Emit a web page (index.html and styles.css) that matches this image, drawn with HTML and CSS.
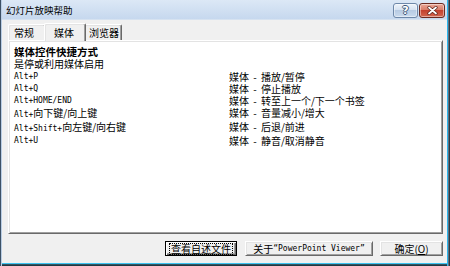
FILE: index.html
```html
<!DOCTYPE html>
<html lang="zh-CN">
<head>
    <meta charset="UTF-8">
    <title>幻灯片放映帮助</title>
    <link rel="stylesheet" href="styles.css">
</head>
<body>
    <div class="window">
        <!-- 标题栏 -->
        <div class="titlebar">
            <span class="title">幻灯片放映帮助</span>
            <div class="tb-buttons">
                <div class="tb-btn help"><span class="q">?</span></div>
                <div class="tb-btn close">
                    <svg width="11" height="9" viewBox="0 0 11 9">
                        <path d="M2 1.5 L9 7.5 M9 1.5 L2 7.5" stroke="#5a2018" stroke-width="3.2" stroke-linecap="round"/>
                        <path d="M2 1.5 L9 7.5 M9 1.5 L2 7.5" stroke="#ffffff" stroke-width="1.8" stroke-linecap="round"/>
                    </svg>
                </div>
            </div>
        </div>

        <div class="content">
            <div class="tabs">
                <div class="tab tab-general">常规</div>
                <div class="tab tab-media active">媒体</div>
                <div class="tab tab-browser">浏览器</div>
            </div>

            <div class="panel">
                <div class="heading">媒体控件快捷方式</div>
                <div class="intro">是停或利用媒体启用</div>
                <div class="keys">
                    <div class="key">Alt+P</div>
                    <div class="desc">媒体 - 播放/暂停</div>
                    <div class="key">Alt+Q</div>
                    <div class="desc">媒体 - 停止播放</div>
                    <div class="key">Alt+HOME/END</div>
                    <div class="desc">媒体 - 转至上一个/下一个书签</div>
                    <div class="key">Alt+<span class="cn">向下键/向上键</span></div>
                    <div class="desc">媒体 - 音量减小/增大</div>
                    <div class="key">Alt+Shift+<span class="cn">向左键/向右键</span></div>
                    <div class="desc">媒体 - 后退/前进</div>
                    <div class="key">Alt+U</div>
                    <div class="desc">媒体 - 静音/取消静音</div>
                </div>
            </div>

            <div class="buttons">
                <button class="btn btn-readme default"><span class="focus">查看自述文件</span></button>
                <button class="btn btn-about">关于 <span class="mono">“PowerPoint Viewer”</span></button>
                <button class="btn btn-ok">确定(<u>O</u>)</button>
            </div>
        </div>
    </div>
</body>
</html>
```

FILE: styles.css
```css
/* 基本设置 */
body {
    margin: 0;
    font-family: "Noto Sans CJK SC", "Liberation Sans", sans-serif;
    color: #000;
}

/* 窗口外框 */
.window {
    width: 450px;
    height: 266px;
    display: flex;
    flex-direction: column;
    background-color: #f0f0f0;
    position: relative;
    overflow: hidden;
}

/* 边框线盖在内容上面 */
.window::after {
    content: "";
    position: absolute;
    inset: 0;
    pointer-events: none;
    box-shadow:
        inset 1px 0 0 #3d5166,
        inset 2px 0 0 #b9cde4,
        inset -1px 0 0 #2c3a46,
        inset -2px 0 0 #5d6f7e,
        inset -3px 0 0 #2ab6ee,
        inset 0 -1px 0 #1f3842,
        inset 0 -2px 0 #35525e,
        inset 0 -3px 0 #3cc2f0;
}

/* 标题栏 */
.titlebar {
    height: 20px;
    display: flex;
    background: linear-gradient(#dce8f6, #c6d8ee);
    border-bottom: 1px solid #d6e2f0;
    box-sizing: border-box;
}

.title {
    font-size: 9.5px;
    line-height: 20px;
    padding-left: 6px;
}

.tb-buttons {
    margin-left: auto;
    margin-top: 3px;
    margin-right: 5px;
    display: flex;
    gap: 1px;
}

.tb-btn {
    width: 23px;
    height: 13px;
    border: 1px solid;
    border-radius: 3px;
    display: flex;
    justify-content: center;
    align-items: center;
    box-shadow: inset 0 0 0 1px rgba(255, 255, 255, 0.45);
}

.help {
    border-color: #6e88a9;
    background: linear-gradient(#eef4fb 0%, #d6e2f1 45%, #b7cbe3 50%, #cadbee 100%);
}

.help .q {
    font-family: "DejaVu Sans", sans-serif;
    font-weight: bold;
    font-size: 11px;
    line-height: 13px;
    color: #ffffff;
    text-shadow: 1px 0 0 #3e5878, -1px 0 0 #3e5878, 0 1px 0 #3e5878, 0 -1px 0 #3e5878;
}

.close {
    width: 24px;
    border-color: #6b2a20;
    background: linear-gradient(#eaa898 0%, #d97d69 45%, #c3412f 50%, #d2664f 100%);
}

/* 内容区域 */
.content {
    flex: 1;
    display: flex;
    flex-direction: column;
    padding: 0 7px 10px 8px;
}

/* 标签页 */
.tabs {
    height: 20px;
    display: flex;
    align-items: flex-end;
    font-size: 10px;
}

.tab {
    height: 16px;
    line-height: 16px;
    box-sizing: border-box;
    border-top: 1px solid #ffffff;
    border-left: 1px solid #ffffff;
    border-right: 1px solid #696969;
    border-radius: 2px 2px 0 0;
    box-shadow: inset -1px 0 0 #a0a0a0, inset 1px 1px 0 #e3e3e3;
    background-color: #f0f0f0;
}

.tab-general {
    width: 38px;
    padding-left: 5px;
}

.tab.active {
    height: 18px;
    line-height: 17px;
    width: 42px;
    padding-left: 9px;
    margin: 0 -2px -1px -2px;
    z-index: 1;
}

.tab-browser {
    width: 38px;
    padding-left: 4px;
}

/* 白色面板 */
.panel {
    flex: 1;
    background-color: #ffffff;
    border: 1px solid;
    border-color: #ffffff #696969 #696969 #ffffff;
    box-shadow: inset 1px 1px 0 #e3e3e3, inset -1px -1px 0 #a0a0a0;
    padding: 5px 5px 0 5px;
    font-size: 10px;
    line-height: 12px;
}

.heading {
    font-weight: bold;
    font-size: 10.5px;
}

.keys {
    display: grid;
    grid-template-columns: 215px auto;
    margin-top: 1px;
}

.key {
    font-family: "DejaVu Sans Mono", monospace;
    font-size: 8px;
    line-height: 12px;
}

.key .cn {
    font-family: "Noto Sans CJK SC", sans-serif;
    font-size: 10px;
}

.desc {
    line-height: 12px;
    word-spacing: 2px;
}

/* 底部按钮 */
.buttons {
    display: flex;
    justify-content: flex-end;
    margin-top: 7px;
    height: 15px;
}

.btn {
    height: 15px;
    padding: 0;
    margin: 0;
    font-family: "Noto Sans CJK SC", sans-serif;
    font-size: 10px;
    line-height: 12px;
    color: #000;
    background-color: #f0f0f0;
    border: 1px solid;
    border-color: #ffffff #696969 #696969 #ffffff;
    box-shadow: inset 1px 1px 0 #e3e3e3, inset -1px -1px 0 #a0a0a0;
    display: flex;
    justify-content: center;
    align-items: center;
}

.btn.default {
    border-color: #000;
    box-shadow: inset 1px 1px 0 #ffffff, inset -1px -1px 0 #696969, inset -2px -2px 0 #a0a0a0;
}

.btn-readme {
    width: 72px;
}

.btn-about {
    width: 128px;
    margin-left: 8px;
}

.btn-ok {
    width: 63px;
    margin-left: 7px;
}

.focus {
    border: 1px dotted #000;
    padding: 0 1px;
    line-height: 10px;
}

.mono {
    font-family: "DejaVu Sans Mono", monospace;
    font-size: 8px;
}
```
